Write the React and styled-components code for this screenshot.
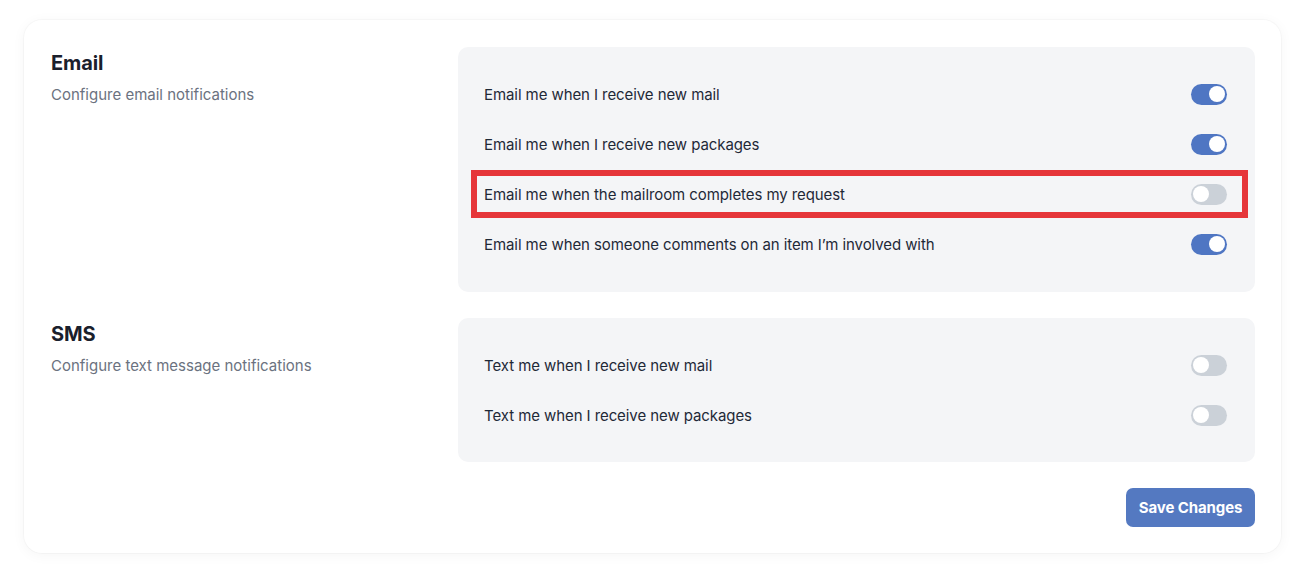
import React from "react";
import styled, { createGlobalStyle } from "styled-components";

const Global = createGlobalStyle`
  * { box-sizing: border-box; }
  body {
    margin: 0;
    background: #ffffff;
    font-family: Inter, "Noto Sans", "Liberation Sans", sans-serif;
    color: #1f2937;
  }
`;

const Page = styled.div`
  padding: 20px 26px 16px 24px;
`;

const Card = styled.div`
  background: #fff;
  border-radius: 18px;
  box-shadow: 0 0 0 1px rgba(0, 0, 0, 0.025), 0 2px 14px rgba(0, 0, 0, 0.045);
  padding: 27px 26px 26px 27px;
  display: flex;
  flex-direction: column;
  gap: 26px;
`;

const Section = styled.section`
  display: grid;
  grid-template-columns: 407px 1fr;
  align-items: start;
`;

const Intro = styled.div`
  display: flex;
  flex-direction: column;
  gap: 6px;
`;

const Title = styled.h2`
  margin: 0;
  font-size: 20px;
  line-height: 32px;
  font-weight: 700;
  color: #1a202c;
  letter-spacing: -0.1px;
`;

const Subtitle = styled.p`
  margin: 0;
  font-size: 15px;
  line-height: 20px;
  color: #6b7280;
  font-weight: 400;
`;

const Panel = styled.div`
  background: #f4f5f7;
  border-radius: 10px;
  padding: 22px 28px ${(p) => (p.$extra ? "23px" : "22px")} 26px;
  display: flex;
  flex-direction: column;
`;

const Row = styled.div`
  position: relative;
  height: 50px;
  display: flex;
  align-items: center;
  justify-content: space-between;
`;

const Label = styled.span`
  font-size: 15px;
  color: #1f2937;
  font-weight: 400;
  letter-spacing: -0.08px;
`;

const Highlight = styled.div`
  position: absolute;
  left: -13px;
  right: -21px;
  top: 1px;
  bottom: 1px;
  border: 6px solid #e6363a;
  pointer-events: none;
`;

const Switch = styled.button`
  position: relative;
  width: 36px;
  height: 21px;
  border-radius: 999px;
  border: none;
  padding: 0;
  cursor: pointer;
  background: ${(p) => (p.$on ? "#4f76c3" : "#cbd1d8")};
  flex-shrink: 0;

  &::after {
    content: "";
    position: absolute;
    top: 2.5px;
    left: ${(p) => (p.$on ? "18px" : "2px")};
    width: 16px;
    height: 16px;
    border-radius: 50%;
    background: #fff;
  }
`;

const Footer = styled.div`
  display: flex;
  justify-content: flex-end;
`;

const SaveButton = styled.button`
  width: 129px;
  height: 39px;
  border: none;
  border-radius: 7px;
  background: #5479c1;
  color: #fff;
  font-family: inherit;
  font-size: 15px;
  font-weight: 700;
  letter-spacing: -0.1px;
  cursor: pointer;
`;

const sections = [
  {
    title: "Email",
    subtitle: "Configure email notifications",
    extra: true,
    items: [
      { label: "Email me when I receive new mail", on: true },
      { label: "Email me when I receive new packages", on: true },
      { label: "Email me when the mailroom completes my request", on: false, highlight: true },
      { label: "Email me when someone comments on an item I’m involved with", on: true },
    ],
  },
  {
    title: "SMS",
    subtitle: "Configure text message notifications",
    items: [
      { label: "Text me when I receive new mail", on: false },
      { label: "Text me when I receive new packages", on: false },
    ],
  },
];

export default function App() {
  return (
    <Page>
      <Global />
      <Card>
        {sections.map((s) => (
          <Section key={s.title}>
            <Intro>
              <Title>{s.title}</Title>
              <Subtitle>{s.subtitle}</Subtitle>
            </Intro>
            <Panel $extra={s.extra}>
              {s.items.map((it) => (
                <Row key={it.label}>
                  <Label>{it.label}</Label>
                  <Switch $on={it.on} aria-label={it.label} />
                  {it.highlight && <Highlight />}
                </Row>
              ))}
            </Panel>
          </Section>
        ))}
        <Footer>
          <SaveButton>Save Changes</SaveButton>
        </Footer>
      </Card>
    </Page>
  );
}
